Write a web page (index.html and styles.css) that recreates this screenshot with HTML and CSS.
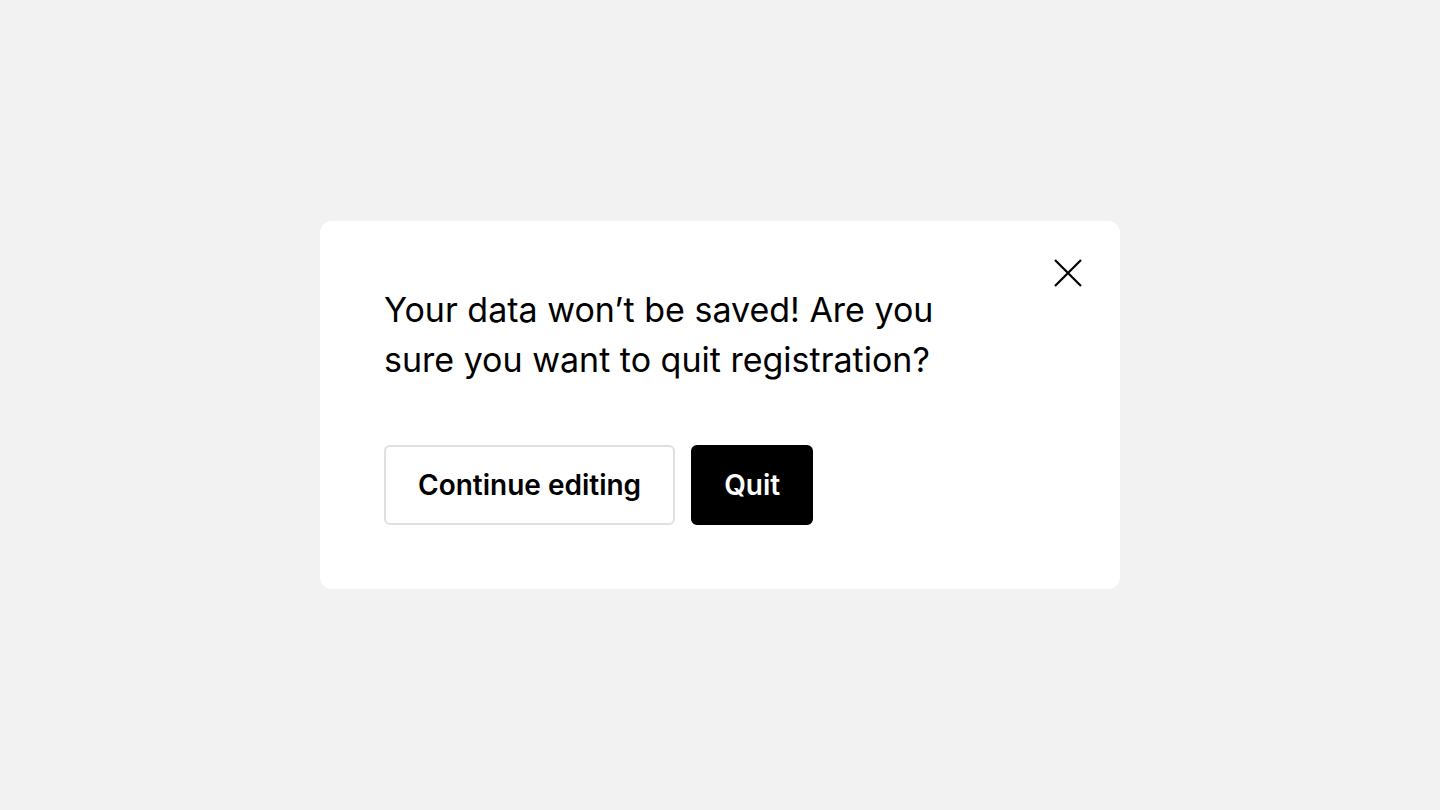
FILE: index.html
```html
<!DOCTYPE html>
<html lang="en">
<head>
    <meta charset="UTF-8">
    <meta name="viewport" content="width=device-width, initial-scale=1.0">
    <title>Quit registration</title>
    <link rel="stylesheet" href="styles.css">
</head>
<body>
    <div class="modal">
        <button class="close-btn" aria-label="Close">
            <svg width="32" height="32" viewBox="0 0 32 32" fill="none">
                <path d="M3 3L29 29M29 3L3 29" stroke="#000" stroke-width="2.2"/>
            </svg>
        </button>
        <p class="message">Your data won’t be saved! Are you sure you want to quit registration?</p>
        <div class="actions">
            <button class="btn btn-outline">Continue editing</button>
            <button class="btn btn-dark">Quit</button>
        </div>
    </div>
</body>
</html>
```

FILE: styles.css
```css
body {
    margin: 0;
    height: 100vh;
    display: flex;
    justify-content: center;
    align-items: center;
    background-color: #f2f2f2;
    font-family: Inter, "Noto Sans", sans-serif;
}
.modal {
    position: relative;
    width: 800px;
    box-sizing: border-box;
    padding: 64px 64px 64px;
    background: white;
    border-radius: 12px;
}
.close-btn {
    position: absolute;
    top: 36px;
    right: 36px;
    width: 32px;
    height: 32px;
    padding: 0;
    border: none;
    background: none;
    cursor: pointer;
}
.close-btn svg {
    display: block;
}
.message {
    margin: 0;
    max-width: 600px;
    font-size: 34px;
    line-height: 50px;
    color: #000;
}
.actions {
    display: flex;
    gap: 16px;
    margin-top: 60px;
}
.btn {
    height: 80px;
    padding: 0 32px;
    font-family: inherit;
    font-size: 28px;
    font-weight: 600;
    border-radius: 6px;
    cursor: pointer;
}
.btn-outline {
    background: white;
    color: #000;
    border: 2px solid #e0e0e0;
}
.btn-dark {
    padding: 0 31px;
    background: #000;
    color: white;
    border: 2px solid #000;
}
```
